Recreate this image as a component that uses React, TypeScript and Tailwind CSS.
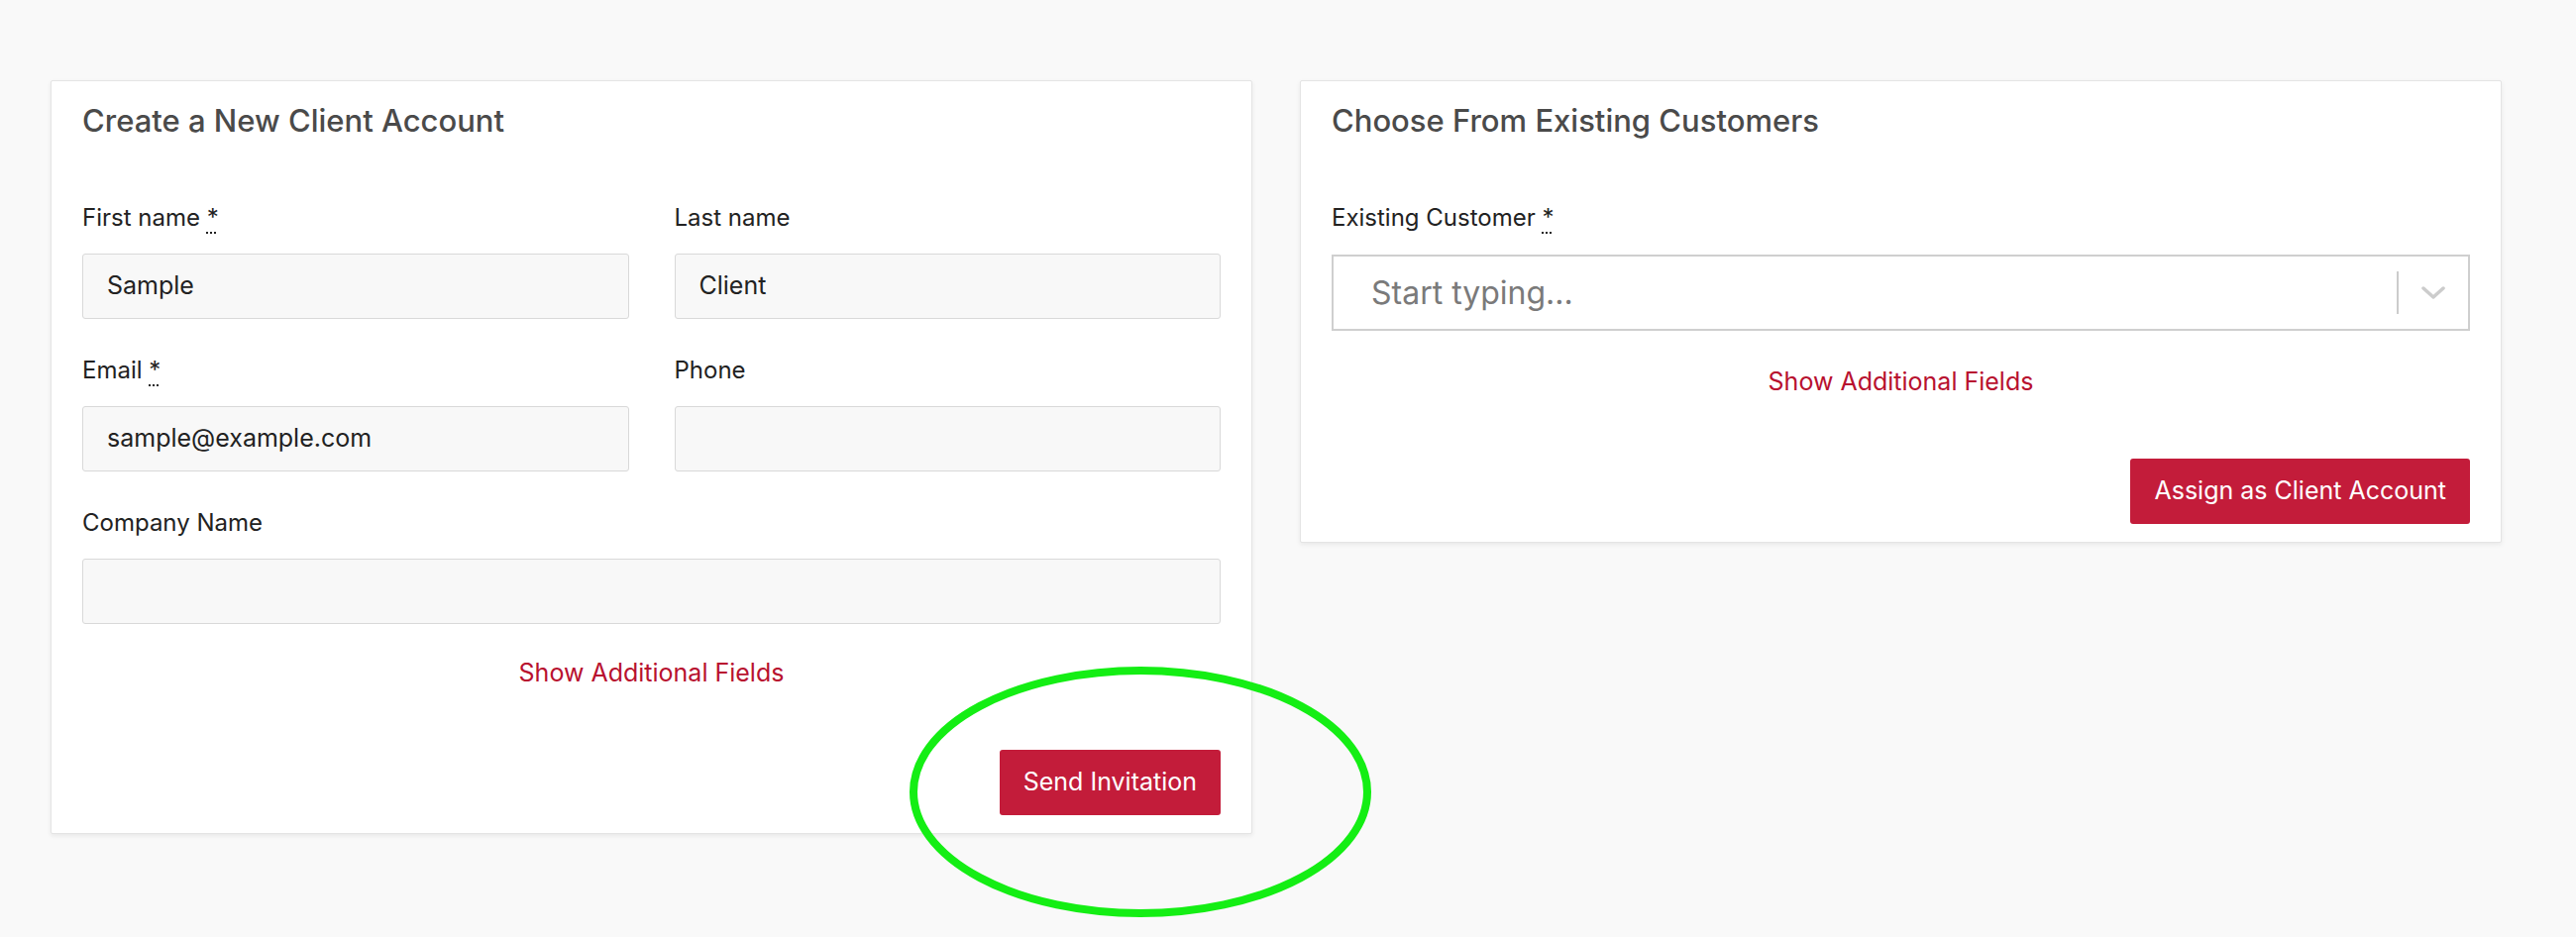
import type { ReactNode } from 'react';

const font = { fontFamily: 'Inter, "Liberation Sans", sans-serif' };

const Required = () => (
  <abbr title="required" className="no-underline">
    <span className="underline decoration-dotted decoration-2 underline-offset-[6px]">*</span>
  </abbr>
);

const Field = ({ label, required, value, className }: { label: string; required?: boolean; value?: string; className?: string }) => (
  <div className={className}>
    <label className="block text-[24px] leading-[32px] text-[#222]">
      {label} {required && <Required />}
    </label>
    <div className="mt-[20px] flex h-[66px] items-center rounded-[3px] border border-[#d9d9d9] bg-[#f8f8f8] pl-[24px] text-[25px] text-[#222]">
      {value}
    </div>
  </div>
);

const Card = ({ title, children, className }: { title: string; children: ReactNode; className?: string }) => (
  <section
    className={`rounded-[2px] border border-[#e4e4e4] bg-white px-[31px] pb-[18px] pt-[20px] shadow-[0_2px_5px_rgba(0,0,0,0.07)] ${className ?? ''}`}
  >
    <h2 className="text-[31px] font-medium leading-[40px] text-[#4a4a4a]">{title}</h2>
    {children}
  </section>
);

const AdditionalFieldsLink = ({ className }: { className?: string }) => (
  <div className={`text-center text-[25px] leading-[32px] ${className ?? ''}`}>
    <a href="#" className="text-[#b8112f]">
      Show Additional Fields
    </a>
  </div>
);

const PrimaryButton = ({ children }: { children: ReactNode }) => (
  <div className="mt-[62px] flex justify-end">
    <button className="h-[66px] rounded-[3px] bg-[#c31c3a] px-[24px] text-[25px] text-white">{children}</button>
  </div>
);

export default function App() {
  return (
    <div className="relative min-h-[946px] bg-[#f9f9f9] pl-[51px] pt-[81px]" style={font}>
      <div className="flex items-start gap-[48px]">
        <Card title="Create a New Client Account" className="w-[1213px]">
          <div className="mt-[62px] grid grid-cols-2 gap-x-[46px] gap-y-[36px]">
            <Field label="First name" required value="Sample" />
            <Field label="Last name" value="Client" />
            <Field label="Email" required value="sample@example.com" />
            <Field label="Phone" />
            <Field label="Company Name" className="col-span-2" />
          </div>
          <AdditionalFieldsLink className="mt-[33px]" />
          <PrimaryButton>Send Invitation</PrimaryButton>
        </Card>

        <Card title="Choose From Existing Customers" className="w-[1213px]">
          <div className="mt-[62px]">
            <label className="block text-[24px] leading-[32px] text-[#222]">
              Existing Customer <Required />
            </label>
            <div className="mt-[21px] flex h-[77px] items-center border-2 border-[#cfcfcf] bg-white">
              <span className="flex-1 pl-[38px] text-[32px] text-[#7a7a7a]">Start typing...</span>
              <span className="h-[43px] w-[2px] bg-[#cccccc]" />
              <span className="flex w-[70px] justify-center">
                <svg width="24" height="14" viewBox="0 0 24 14" fill="none">
                  <path d="M2 2l10 9 10-9" stroke="#cccccc" strokeWidth="3.5" strokeLinecap="round" strokeLinejoin="round" />
                </svg>
              </span>
            </div>
          </div>
          <AdditionalFieldsLink className="mt-[35px]" />
          <PrimaryButton>Assign as Client Account</PrimaryButton>
        </Card>
      </div>

      {/* hand-drawn highlight ring around the invite button */}
      <svg className="pointer-events-none absolute left-[918px] top-[673px]" width="466" height="253" viewBox="0 0 466 253">
        <ellipse cx="233" cy="126.5" rx="229" ry="122.5" fill="none" stroke="#14ee14" strokeWidth="8" />
      </svg>
    </div>
  );
}
